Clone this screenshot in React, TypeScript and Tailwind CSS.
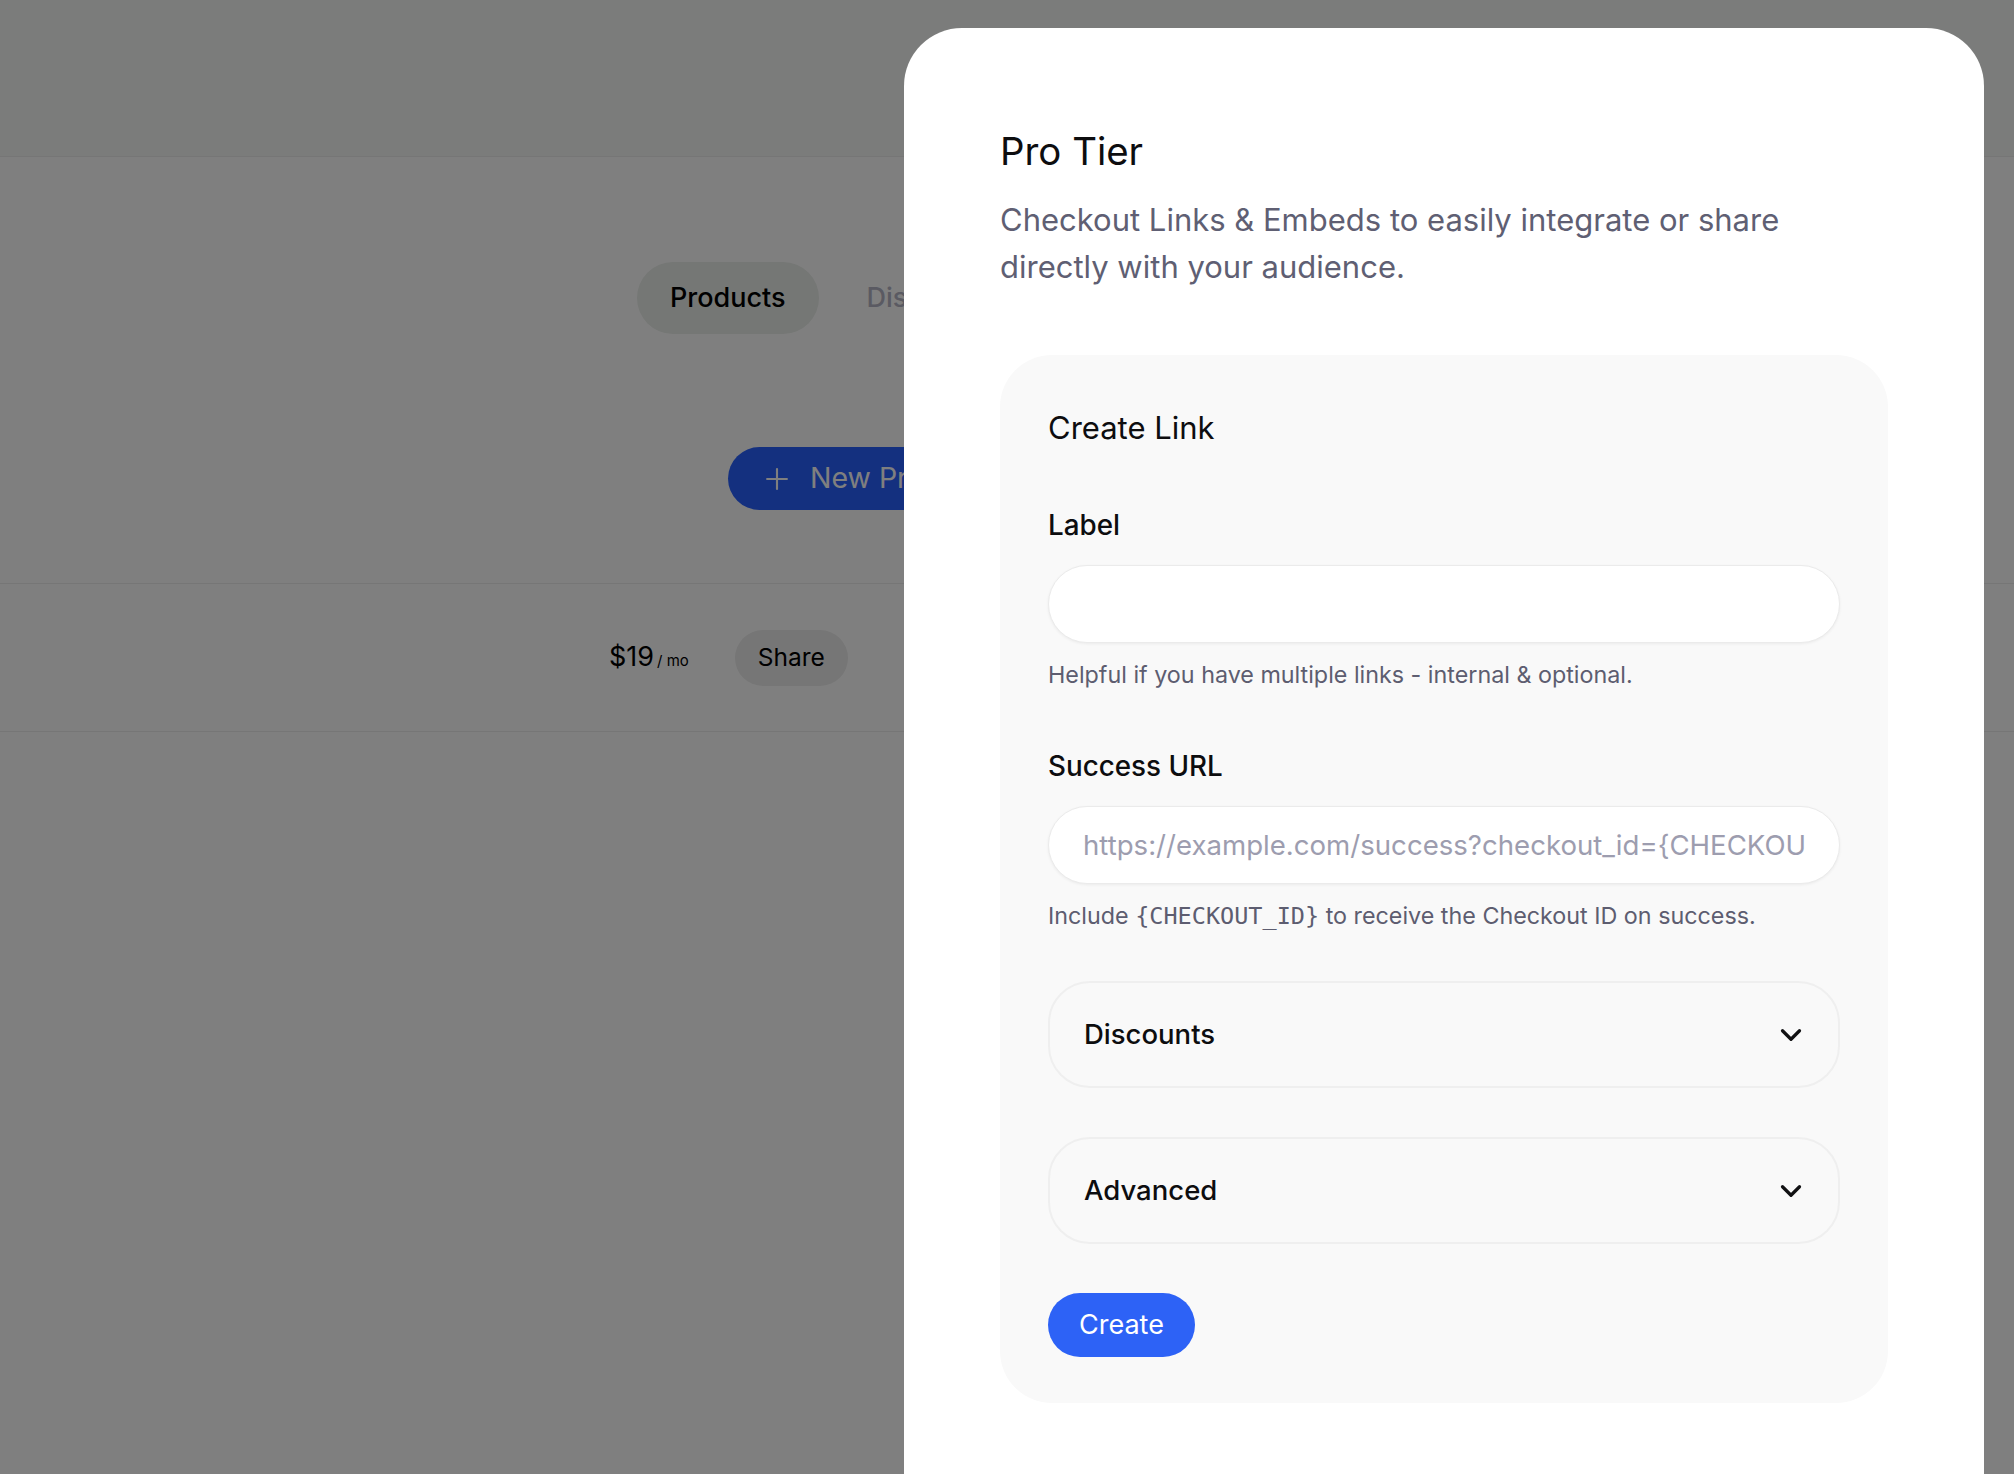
import { ChevronDown, Plus } from "lucide-react";

const Field = ({
  label,
  placeholder,
  className = "",
  children,
}: {
  label: string;
  placeholder?: string;
  className?: string;
  children: React.ReactNode;
}) => (
  <div className={`flex flex-col ${className}`}>
    <label className="text-[27.8px] leading-[40px] font-medium text-[#0d0d0f]">{label}</label>
    <input
      className="mt-[20px] h-[78px] w-full rounded-full border border-[#ebebeb] bg-white px-[34px] text-[27.6px] text-[#0d0d0f] shadow-[0_1px_3px_rgba(0,0,0,0.06)] outline-none placeholder:text-[#9d9daf]"
      placeholder={placeholder}
    />
    <p className="mt-[16px] text-[23.3px] leading-[32px] text-[#5d5d70]">{children}</p>
  </div>
);

const Disclosure = ({ title }: { title: string }) => (
  <button className="flex h-[107px] w-full items-center justify-between rounded-[42px] border-2 border-[#efefef] bg-[#f9f9f9] pl-[34px] pr-[30px] text-left">
    <span className="text-[27.5px] font-medium text-[#0d0d0f]">{title}</span>
    <ChevronDown size={34} strokeWidth={2.3} className="text-[#111113]" />
  </button>
);

export default function App() {
  return (
    <div className="relative min-h-screen overflow-hidden bg-white font-['Inter',sans-serif]">
      {/* page behind the sheet */}
      <header className="h-[157px] border-b border-[#ececec] bg-[#f6f8f6]" />
      <div className="flex items-center gap-[15px] pl-[637px] pt-[105px]">
        <div className="flex h-[72px] items-center rounded-full bg-[#eaeeea] px-[33px] text-[27px] font-medium text-black">
          Products
        </div>
        <div className="flex h-[72px] items-center pl-[33px] text-[27px] font-medium text-[#b4b4c4]">Dis</div>
      </div>
      <div className="border-b border-[#ececec] pb-[73px] pl-[728px] pt-[113px]">
        <button className="flex h-[63px] items-center gap-[16px] rounded-full bg-[#2860fe] pl-[32px] pr-[40px] text-[28.5px] text-white">
          <Plus size={34} strokeWidth={1.5} />
          New Product
        </button>
      </div>
      <div className="flex h-[148px] items-center gap-[46px] border-b border-[#ececec] pl-[609px]">
        <div className="flex items-baseline text-black">
          <span className="text-[27px]">$19</span>
          <span className="ml-[3px] text-[15px]">/ mo</span>
        </div>
        <button className="flex h-[56px] items-center rounded-full bg-[#ececec] px-[23px] text-[24.5px] text-black">
          Share
        </button>
      </div>

      {/* overlay */}
      <div className="fixed inset-0 bg-black/50" />

      {/* sheet */}
      <div className="fixed bottom-0 right-[30px] top-[28px] flex w-[1080px] flex-col rounded-t-[58px] bg-white px-[96px] pt-[98px]">
        <h2 className="text-[38.4px] leading-[51px] text-[#0d0d0f]">Pro Tier</h2>
        <p className="mt-[19px] text-[31px] leading-[47px] text-[#5f5f73]">
          Checkout Links &amp; Embeds to easily integrate or share directly with your audience.
        </p>

        <div className="mt-[65px] flex flex-col rounded-[52px] bg-[#f9f9f9] px-[48px] pb-[46px] pt-[50px]">
          <h3 className="text-[31px] leading-[45px] text-[#0d0d0f]">Create Link</h3>
          <div className="mt-[55px] flex flex-col gap-[49px]">
            <Field label="Label">Helpful if you have multiple links - internal &amp; optional.</Field>
            <Field
              label="Success URL"
              className="mt-[6px]"
              placeholder="https://example.com/success?checkout_id={CHECKOUT_ID}"
            >
              Include{" "}
              <code className="font-['DejaVu_Sans_Mono',monospace] text-[23.5px]">{"{CHECKOUT_ID}"}</code> to receive
              the Checkout ID on success.
            </Field>
            <Disclosure title="Discounts" />
            <Disclosure title="Advanced" />
            <div>
              <button className="h-[64px] rounded-full bg-[#2d62f6] px-[31px] text-[27px] text-white">Create</button>
            </div>
          </div>
        </div>
      </div>
    </div>
  );
}
